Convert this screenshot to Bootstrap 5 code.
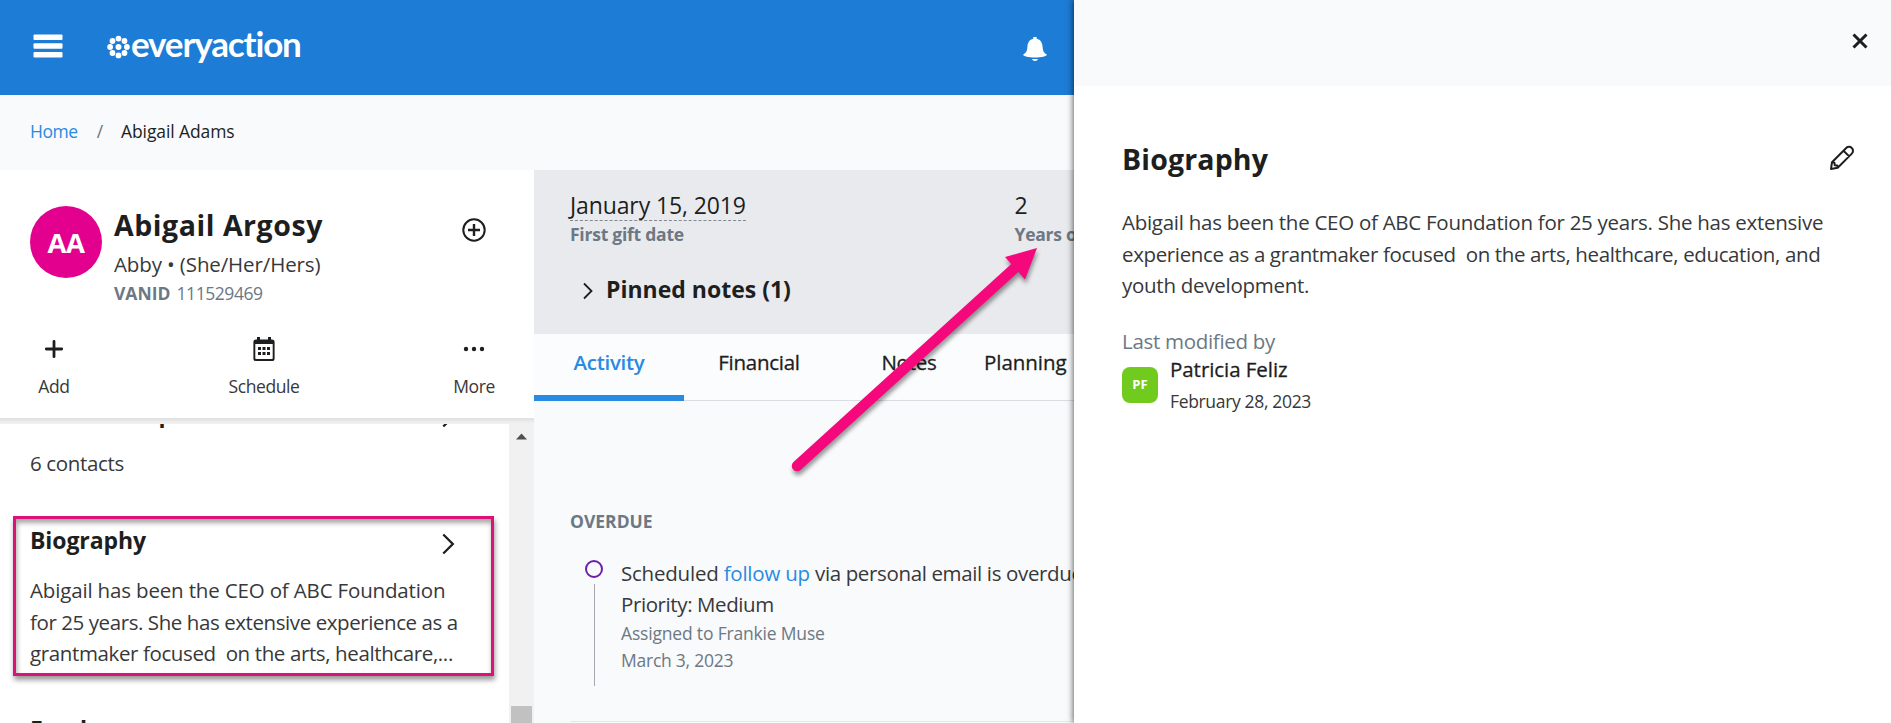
<!DOCTYPE html>
<html lang="en">
<head>
<meta charset="utf-8">
<meta name="viewport" content="width=device-width, initial-scale=1">
<title>Abigail Argosy | EveryAction</title>
<link href="https://cdn.jsdelivr.net/npm/bootstrap@5.3.0/dist/css/bootstrap.min.css" rel="stylesheet">
<style>
  body { font-family: "Open Sans", "Noto Sans", sans-serif; font-size: 20.5px; line-height: 31.5px; letter-spacing: -.22px; color: #37383a; background: #f9fafc; }
  svg { display: block; flex: none; }
  .app { width: 1891px; height: 723px; }
  .left-side { width: 1074px; }
  .topbar { height: 95px; background: #1c7cd6; color: #fff; padding: 0 27px 0 33px; }
  .brand-name { font: 700 35px/40px Lato, "Open Sans", sans-serif; letter-spacing: -1.15px; color: #fff; margin-left: 1px; }
  .crumbs { height: 75px; padding: 0 30px 1px; font-size: 17.5px; letter-spacing: -.1px; }
  .crumbs a { letter-spacing: -.45px; }
  a { color: #288ae0; text-decoration: none; }
  .ink { color: #1d1e20; }
  .medium { font-weight: 500; -webkit-text-stroke: .3px currentColor; }
  .sub { color: #6c7883; font-size: 17.5px; line-height: 27px; letter-spacing: -.3px; }
  .profile { width: 534px; background: #fff; }
  .profile-head { height: 248px; padding-top: 35px; }
  .avatar { width: 72px; height: 72px; background: #e3008f; font-size: 27.5px; letter-spacing: -.4px; color: #fff; padding: 1px 0 0; margin-top: 1px; }
  .person { font-size: 28.5px; line-height: 40px; letter-spacing: .55px; }
  .alias { line-height: 38px; letter-spacing: -.12px; }
  .vanid { line-height: 20px; letter-spacing: -.44px; }
  .vanid b { letter-spacing: 0; margin-right: 2px; }
  .actions { padding: 0 15px 0 9px; margin-top: 34px; }
  .act { width: 90px; font-size: 17.5px; line-height: 26px; letter-spacing: -.4px; }
  .act span { margin-top: 12px; }
  .edge { height: 6px; background: linear-gradient(#dfdfdf, #f3f3f3); }
  .sections { margin-top: -27px; padding: 0 54px 0 30px; }
  .sec-title { font-size: 23px; line-height: 32px; letter-spacing: -.1px; font-weight: 700; color: #1d1e20; }
  .callout { left: 13px; top: 92px; width: 481px; height: 160px; border: 3px solid #dc1278; box-shadow: 1px 4px 5px rgba(0,0,0,.4), inset 1px 4px 5px rgba(0,0,0,.35); }
  .track { width: 25px; background: #f1f1f1; padding-top: 9px; }
  .thumb { width: 21px; height: 17px; background: #c1c1c1; }
  .summary { height: 164px; background: #e9eaee; padding: 20px 0 0 36px; }
  .stat { width: 444.5px; }
  .stat-value { font-size: 23px; line-height: 30px; letter-spacing: -.12px; color: #1d1e20; }
  .dashed { border-bottom: 1px dashed #858a92; }
  .stat .sub { line-height: 24px; padding-top: 1px; letter-spacing: -.24px; }
  .tabs { height: 67px; background: #fbfcfe; border-bottom: 1px solid #dadee3; color: #1d1e20; letter-spacing: -.25px; }
  .tab-item { width: 150px; height: 67px; padding-top: 13px; text-align: center; }
  .tab-item.current { color: #288ae0; font-weight: 600; -webkit-text-stroke: 0; border-bottom: 6px solid #288ae0; letter-spacing: -.3px; }
  .feed { padding: 107px 0 0 36px; }
  .ring { width: 18px; height: 18px; border: 2px solid #6b21a8; border-radius: 50%; }
  .stem { width: 1px; height: 102px; background: #a5a9af; }
  .feed-rule { border-top: 1px solid #e4e6ea; margin-top: 35px; }
  .drawer { width: 817px; background: #fff; box-shadow: -1px 0 6px rgba(0,0,0,.6); z-index: 2; }
  .drawer-head { height: 86px; background: #f9fafc; padding: 0 23px 4px 0; }
  .drawer-body { padding: 53px 36px 0 48px; }
  .chip { width: 36px; height: 36px; background: #71cb1e; border-radius: 8px; font-size: 13px; letter-spacing: 0; color: #fff; margin-top: 12px; }
  .pointer { left: 780px; top: 235px; filter: drop-shadow(1px 4px 2px rgba(0,0,0,.4)); z-index: 1; }
</style>
</head>
<body>
<div class="app d-flex position-relative overflow-hidden">
  <div class="left-side flex-shrink-0 d-flex flex-column overflow-hidden">
    <nav class="topbar d-flex align-items-center flex-shrink-0">
      <svg width="30" height="24" viewBox="0 0 30 24" fill="#fff" style="margin-top:-3px"><rect x=".5" y=".5" width="29" height="5.6" rx="1"/><rect x=".5" y="9.2" width="29" height="5.6" rx="1"/><rect x=".5" y="18" width="29" height="5.6" rx="1"/></svg>
      <div class="d-flex align-items-center" style="margin:-9px 0 0 44px">
        <svg width="23" height="24" viewBox="-11.5 -12 23 24" fill="#fff" style="margin-top:8px"><circle r="3"/><circle cy="-8.4" r="2.9"/><circle cy="8.4" r="2.9"/><circle cx="-8.4" r="2.9"/><circle cx="8.4" r="2.9"/><circle cx="-6" cy="-6" r="2.9"/><circle cx="6" cy="-6" r="2.9"/><circle cx="-6" cy="6" r="2.9"/><circle cx="6" cy="6" r="2.9"/></svg>
        <span class="brand-name">everyaction</span>
      </div>
      <svg class="ms-auto" width="24" height="24" viewBox="0 0 24 24" fill="#fff" style="margin-top:3px"><path d="M10.300 0h3.400v1.800c4 .9 5.600 4 5.900 8 .3 4.200 1.200 6.200 4.400 8-.4 1.500-5.500 2.700-12 2.700S.4 19.300 0 17.800c3.200-1.800 4.100-3.800 4.400-8 .3-4 1.900-7.100 5.900-8zM9 22h6c-.4 1.300-1.500 2-3 2s-2.600-.7-3-2z"/></svg>
    </nav>
    <div class="crumbs d-flex align-items-center flex-shrink-0">
      <a href="#">Home</a><span class="text-secondary" style="margin:0 18px 0 19px">/</span><span class="ink">Abigail Adams</span>
    </div>
    <div class="d-flex flex-grow-1 overflow-hidden">
      <aside class="profile flex-shrink-0 d-flex flex-column">
        <div class="profile-head flex-shrink-0">
          <div class="d-flex">
            <div class="avatar rounded-circle d-flex align-items-center justify-content-center fw-bold" style="margin-left:30px">AA</div>
            <div style="margin-left:12px">
              <div class="person ink fw-bold">Abigail Argosy</div>
              <div class="alias">Abby • (She/Her/Hers)</div>
              <div class="sub vanid"><b>VANID</b> 111529469</div>
            </div>
            <svg class="ms-auto" width="24" height="24" viewBox="0 0 24 24" fill="none" stroke="#1d1e20" stroke-width="2" style="margin:13px 48px 0 0"><circle cx="12" cy="12" r="10.700"/><path d="M12 6v12M6 12h12" stroke-width="2.400"/></svg>
          </div>
          <div class="actions d-flex justify-content-between">
            <div class="act d-flex flex-column align-items-center">
              <svg width="24" height="24" viewBox="0 0 24 24" stroke="#1d1e20" stroke-width="2.800" stroke-linecap="round"><path d="M12 4.300v15.400M4.300 12h15.400"/></svg><span>Add</span>
            </div>
            <div class="act d-flex flex-column align-items-center">
              <svg width="24" height="24" viewBox="0 0 24 24" fill="#1d1e20"><path fill-rule="evenodd" d="M5 0h3v2.500h8V0h3v2.500h1a2.600 2.600 0 0 1 2.600 2.600v16.300A2.600 2.600 0 0 1 20 24H4a2.600 2.600 0 0 1-2.600-2.600V5.100A2.600 2.600 0 0 1 4 2.500h1zM3.300 7v14.300c0 .5.300.8.800.8h15.800c.5 0 .8-.3.800-.8V7z"/><path d="M6 10h3v3H6zM10.500 10h3v3h-3zM15 10h3v3h-3zM6 15h3v3H6zM10.500 15h3v3h-3zM15 15h3v3h-3z"/></svg><span>Schedule</span>
            </div>
            <div class="act d-flex flex-column align-items-center">
              <svg width="24" height="24" viewBox="0 0 24 24" fill="#1d1e20"><circle cx="4" cy="12" r="2.200"/><circle cx="12" cy="12" r="2.200"/><circle cx="20" cy="12" r="2.200"/></svg><span>More</span>
            </div>
          </div>
        </div>
        <div class="edge flex-shrink-0"></div>
        <div class="d-flex flex-grow-1 overflow-hidden position-relative">
          <div class="flex-grow-1 overflow-hidden">
            <div class="sections">
              <div class="sec-title d-flex justify-content-between align-items-center"><span>Relationships</span><svg width="13" height="22" viewBox="0 0 13 22" fill="none" stroke="#1d1e20" stroke-width="2.300" style="margin-top:7px"><path d="M1.300 1.500l9.500 9.500-9.500 9.500"/></svg></div>
              <div style="line-height:32px;margin-top:18px;letter-spacing:-.34px">6 contacts</div>
              <div class="sec-title d-flex justify-content-between align-items-center" style="margin-top:45px"><span>Biography</span><svg width="13" height="22" viewBox="0 0 13 22" fill="none" stroke="#1d1e20" stroke-width="2.300" style="margin-top:7px"><path d="M1.300 1.500l9.500 9.500-9.500 9.500"/></svg></div>
              <div class="text-nowrap" style="margin-top:19px"><span style="letter-spacing:-.16px">Abigail has been the CEO of ABC Foundation</span><br><span style="letter-spacing:-.42px">for 25 years. She has extensive experience as a</span><br><span style="letter-spacing:-.38px">grantmaker focused &nbsp;on the arts, healthcare,...</span></div>
              <div class="sec-title" style="margin-top:43px">Funds</div>
            </div>
          </div>
          <div class="track d-flex flex-column align-items-center">
            <svg width="11" height="7" viewBox="0 0 11 7" fill="#505050"><path d="M0 6.500L5.500.5 11 6.500z"/></svg>
            <div class="thumb mt-auto"></div>
          </div>
          <div class="callout position-absolute"></div>
        </div>
      </aside>
      <main class="flex-grow-1 overflow-hidden">
        <div class="summary text-nowrap">
          <div class="d-flex">
            <div class="stat flex-shrink-0">
              <div class="d-flex"><span class="stat-value dashed">January 15, 2019</span></div>
              <div class="sub fw-bold">First gift date</div>
            </div>
            <div class="stat flex-shrink-0">
              <div class="stat-value" style="padding-bottom:1px">2</div>
              <div class="sub fw-bold">Years of giving</div>
            </div>
          </div>
          <div class="d-flex" style="margin:27px 0 0 13px">
            <svg width="11" height="18" viewBox="0 0 11 18" fill="none" stroke="#1d1e20" stroke-width="1.800" style="margin-top:9px"><path d="M1 1.500L8.500 9 1 16.500"/></svg>
            <span class="sec-title" style="margin-left:12px;letter-spacing:0">Pinned notes (1)</span>
          </div>
        </div>
        <div class="tabs d-flex medium">
          <div class="tab-item current">Activity</div>
          <div class="tab-item">Financial</div>
          <div class="tab-item">Notes</div>
          <div class="tab-item w-auto" style="letter-spacing:-.05px">Planning</div>
        </div>
        <div class="feed text-nowrap">
          <div class="sub fw-bold" style="letter-spacing:0">OVERDUE</div>
          <div class="d-flex" style="margin-top:23px">
            <div class="d-flex flex-column align-items-center" style="margin:2px 18px 0 15px"><div class="ring"></div><div class="stem" style="margin-top:6px"></div></div>
            <div style="line-height:31px;letter-spacing:-.22px">
              <div>Scheduled <a href="#">follow up</a> <span style="letter-spacing:-.36px">via personal email is overdue</span></div>
              <div style="letter-spacing:-.4px">Priority: Medium</div>
              <div class="sub" style="letter-spacing:-.18px">Assigned to Frankie Muse</div>
              <div class="sub" style="letter-spacing:-.24px">March 3, 2023</div>
            </div>
          </div>
          <div class="feed-rule"></div>
        </div>
      </main>
    </div>
  </div>
  <section class="drawer flex-shrink-0">
    <div class="drawer-head d-flex align-items-center justify-content-end">
      <svg width="16" height="16" viewBox="0 0 16 16" stroke="#1d1e20" stroke-width="3"><path d="M1.500 1.500l13 13M14.500 1.500l-13 13"/></svg>
    </div>
    <div class="drawer-body">
      <div class="d-flex justify-content-between">
        <span class="ink fw-bold" style="font-size:28.500px;line-height:40px;letter-spacing:.15px">Biography</span>
        <svg width="26" height="26" viewBox="0 0 26 26" fill="none" stroke="#1d1e20" stroke-width="2" stroke-linejoin="round" style="margin-top:6px"><path d="M2 24l1-6.800L17.200 3a3.900 3.900 0 0 1 5.600 0 3.900 3.900 0 0 1 0 5.600L8.700 22.700zM14.500 5.700l5.700 5.700M3.200 17.200l2.200.5.400 2.600 2.500.3.500 2"/></svg>
      </div>
      <div style="margin-top:28px;width:715px;letter-spacing:-.27px">Abigail has been the CEO of ABC Foundation for 25 years. She has extensive <span style="letter-spacing:-.37px">experience as a grantmaker focused &nbsp;on the arts, healthcare, education, and</span> youth development.</div>
      <div class="sub" style="font-size:20.500px;line-height:28px;margin-top:25.500px">Last modified by</div>
      <div class="d-flex">
        <div class="chip d-flex align-items-center justify-content-center fw-bold">PF</div>
        <div style="margin-left:12px">
          <div class="ink medium" style="line-height:28px;letter-spacing:-.05px">Patricia Feliz</div>
          <div style="font-size:17.500px;line-height:36px;letter-spacing:-.34px">February 28, 2023</div>
        </div>
      </div>
    </div>
  </section>
  <svg class="pointer position-absolute" width="270" height="245" viewBox="780 235 270 245"><path d="M797 466L1017 266" stroke="#f5087b" stroke-width="10.500" stroke-linecap="round"/><path d="M1037 248L1005 257l20 22.500z" fill="#f5087b"/></svg>
</div>
<script src="https://cdn.jsdelivr.net/npm/bootstrap@5.3.0/dist/js/bootstrap.bundle.min.js"></script>
</body>
</html>
